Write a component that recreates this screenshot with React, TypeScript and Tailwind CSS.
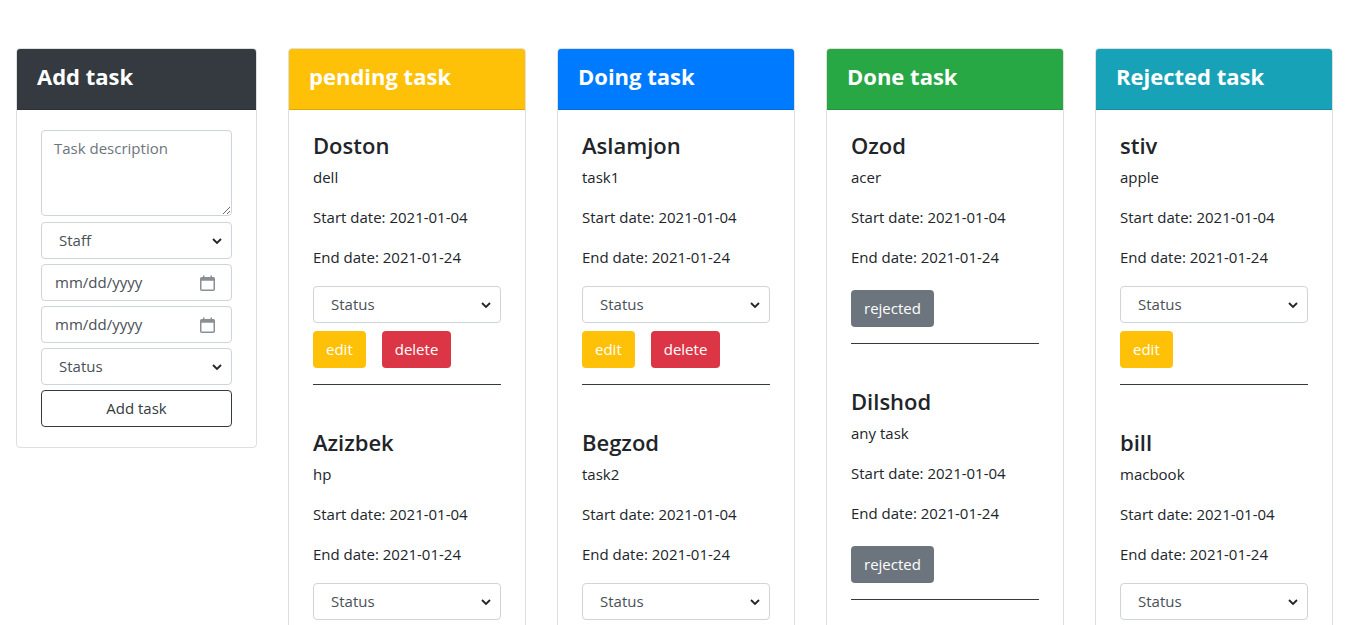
import React from "react";

type Task = { name: string; desc: string };

const columns = [
  {
    title: "pending task",
    head: "bg-[#ffc107]",
    kind: "edit-delete",
    tasks: [
      { name: "Doston", desc: "dell" },
      { name: "Azizbek", desc: "hp" },
    ],
  },
  {
    title: "Doing task",
    head: "bg-[#007bff]",
    kind: "edit-delete",
    tasks: [
      { name: "Aslamjon", desc: "task1" },
      { name: "Begzod", desc: "task2" },
    ],
  },
  {
    title: "Done task",
    head: "bg-[#28a745]",
    kind: "rejected",
    tasks: [
      { name: "Ozod", desc: "acer" },
      { name: "Dilshod", desc: "any task" },
    ],
  },
  {
    title: "Rejected task",
    head: "bg-[#17a2b8]",
    kind: "edit",
    tasks: [
      { name: "stiv", desc: "apple" },
      { name: "bill", desc: "macbook" },
    ],
  },
];

function Chevron() {
  return (
    <svg
      className="pointer-events-none absolute right-[10px] top-1/2 -translate-y-1/2"
      width="10"
      height="7"
      viewBox="0 0 10 7"
      fill="none"
    >
      <path d="M1 1.5l4 4 4-4" stroke="#212529" strokeWidth="1.8" />
    </svg>
  );
}

function Select({ label }: { label: string }) {
  return (
    <div className="relative">
      <select
        className="block h-[37px] w-full appearance-none rounded-[4px] border border-[#ced4da] bg-white pl-[17px] pr-8 text-[15px] text-[#495057] outline-none"
        defaultValue={label}
      >
        <option>{label}</option>
      </select>
      <Chevron />
    </div>
  );
}

function DateField() {
  return (
    <div className="flex h-[37px] items-center justify-between rounded-[4px] border border-[#ced4da] bg-white pl-[13px] pr-[16px] text-[15px] text-[#495057]">
      <span>mm/dd/yyyy</span>
      <svg width="15" height="16" viewBox="0 0 15 16" fill="none">
        <rect x="0.75" y="2.75" width="13.5" height="12.5" rx="1" stroke="#8a8f94" strokeWidth="1.5" />
        <rect x="0.75" y="2.75" width="13.5" height="3" fill="#8a8f94" />
        <rect x="3" y="0.5" width="1.5" height="3" fill="#8a8f94" />
        <rect x="10.5" y="0.5" width="1.5" height="3" fill="#8a8f94" />
      </svg>
    </div>
  );
}

function Btn({ label, color }: { label: string; color: string }) {
  return (
    <button className={`h-[37px] rounded-[4px] px-[13px] text-[15px] text-white ${color}`}>
      {label}
    </button>
  );
}

function TaskItem({ task, kind, first }: { task: Task; kind: string; first: boolean }) {
  return (
    <div className={first ? "" : "mt-[40px]"}>
      <h3 className="mb-[3px] text-[22px] font-semibold leading-[34px] text-[#212529]">
        {task.name}
      </h3>
      <p className="mb-4 leading-6">{task.desc}</p>
      <p className="mb-4 leading-6">Start date: 2021-01-04</p>
      <p className="leading-6">End date: 2021-01-24</p>
      {kind === "rejected" ? (
        <div className="mt-[21px]">
          <Btn label="rejected" color="bg-[#6c757d]" />
        </div>
      ) : (
        <>
          <div className="mt-[17px]">
            <Select label="Status" />
          </div>
          <div className="mt-2 flex gap-4">
            <Btn label="edit" color="bg-[#ffc107]" />
            {kind === "edit-delete" && <Btn label="delete" color="bg-[#dc3545]" />}
          </div>
        </>
      )}
      <hr className="mt-4 border-t border-[#343a40]" />
    </div>
  );
}

export default function App() {
  return (
    <div
      className="h-screen overflow-hidden bg-white text-[15px] text-[#212529]"
      style={{ fontFamily: '"Open Sans", "Noto Sans", sans-serif' }}
    >
      <div className="grid grid-cols-[241px_repeat(4,238px)] gap-x-[31px] pl-4 pt-12">
        <div className="self-start overflow-hidden rounded-[4px] border border-black/[.125]">
          <div className="flex h-[61px] items-center border-b border-black/[.125] bg-[#343a40] px-5 pb-[6px] text-[22px] font-bold text-white">
            Add task
          </div>
          <div className="flex flex-col gap-[5px] px-6 pb-5 pt-5">
            <textarea
              placeholder="Task description"
              className="mb-[1px] h-[86px] resize-y rounded-[4px] border border-[#ced4da] px-3 py-[6px] text-[15px] text-[#495057] outline-none placeholder:text-[#6c757d]"
            />
            <Select label="Staff" />
            <DateField />
            <DateField />
            <Select label="Status" />
            <button className="h-[37px] rounded-[4px] border border-[#343a40] bg-white text-[15px] text-[#343a40]">
              Add task
            </button>
          </div>
        </div>

        {columns.map((col) => (
          <div key={col.title} className="min-h-[700px] rounded-[4px] border border-black/[.125]">
            <div
              className={`flex h-[61px] items-center rounded-t-[3px] border-b border-black/[.125] px-5 pb-[6px] text-[22px] font-bold text-white ${col.head}`}
            >
              {col.title}
            </div>
            <div className="px-6 pb-5 pt-[18px]">
              {col.tasks.map((t, i) => (
                <TaskItem key={t.name} task={t} kind={col.kind} first={i === 0} />
              ))}
            </div>
          </div>
        ))}
      </div>
    </div>
  );
}
